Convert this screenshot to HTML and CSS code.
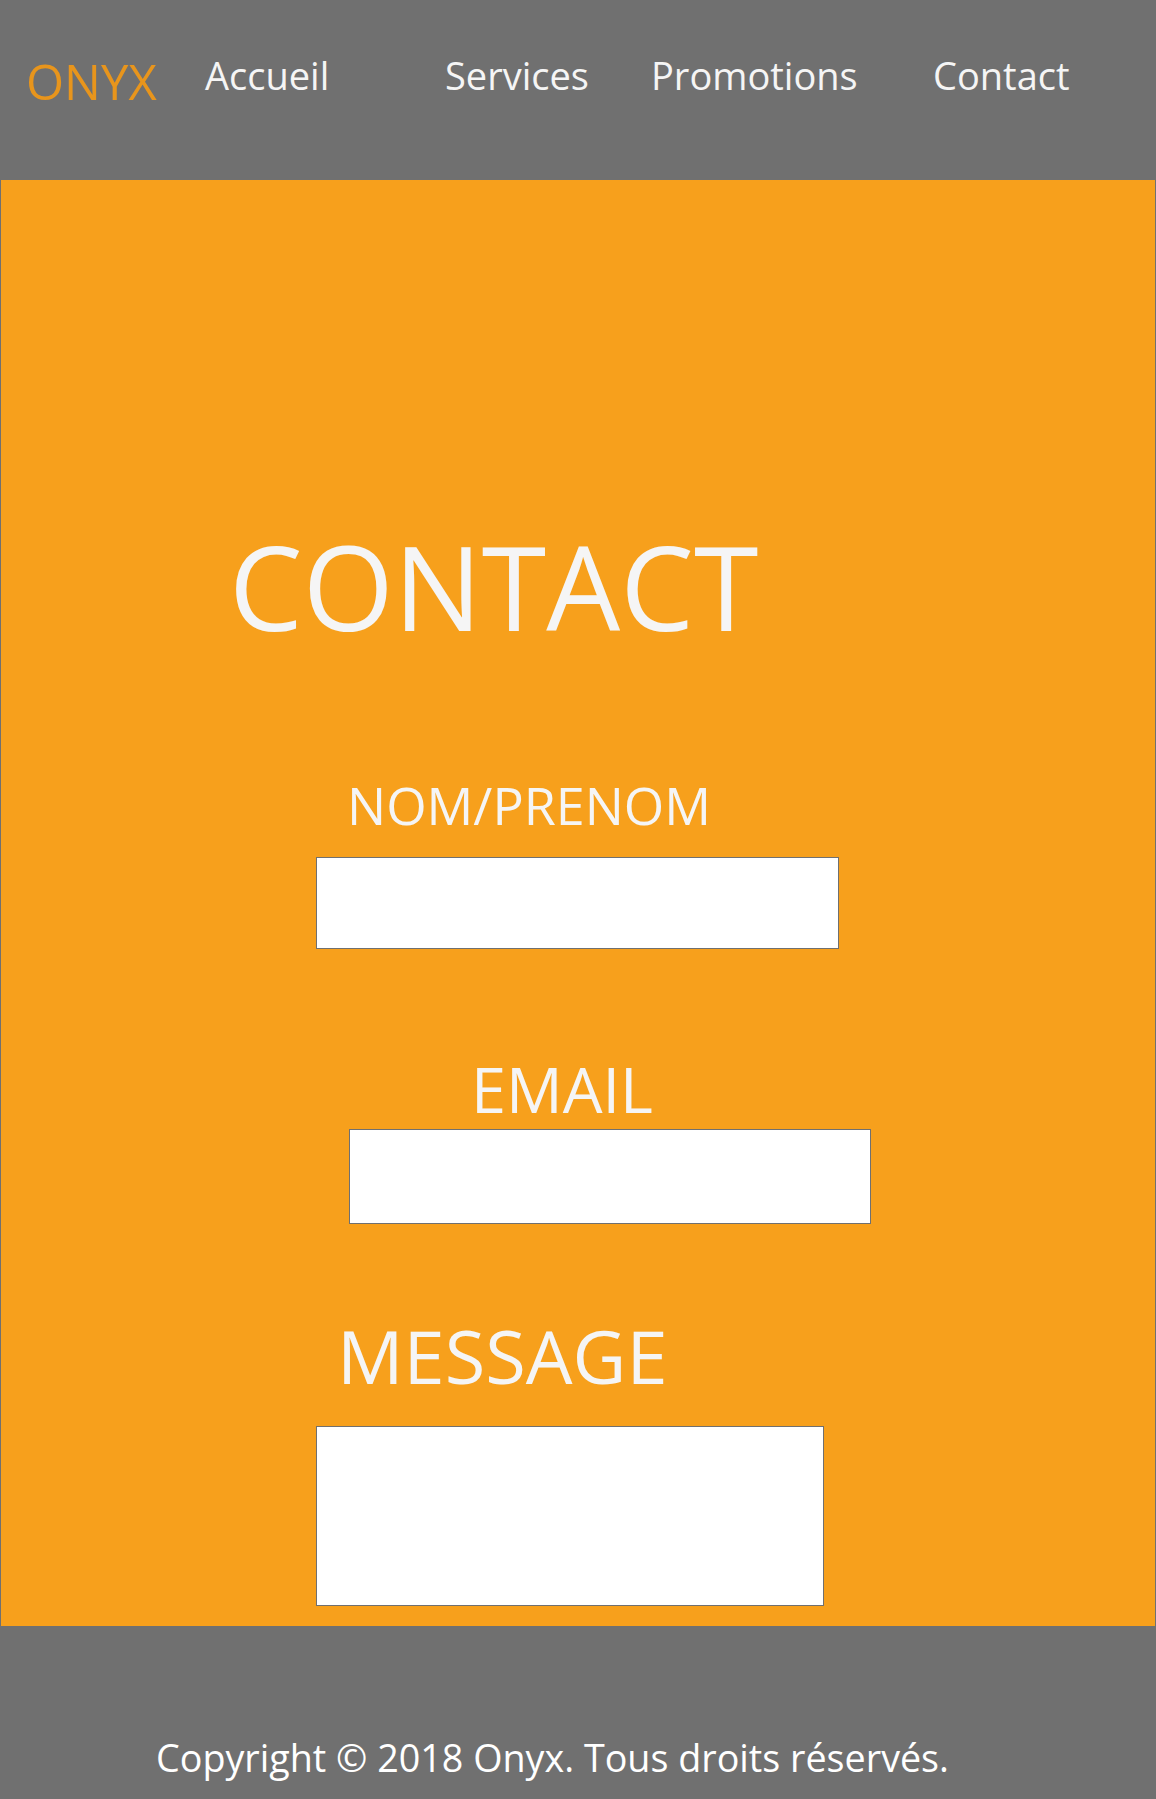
FILE: index.html
```html
<!DOCTYPE html>
<html lang="fr">
<head>
<meta charset="utf-8">
<title>Onyx - Contact</title>
<link rel="stylesheet" href="styles.css">
</head>
<body>
<header class="site-header">
  <div class="logo">ONYX</div>
  <a class="nav-link" href="#">Accueil</a>
  <a class="nav-link" href="#">Services</a>
  <a class="nav-link" href="#">Promotions</a>
  <a class="nav-link" href="#">Contact</a>
</header>
<main class="contact">
  <h1 class="contact-title">CONTACT</h1>
  <form class="contact-form">
    <label class="field-label label-name" for="nom">NOM/PRENOM</label>
    <input class="field input-name" id="nom" type="text">
    <label class="field-label label-email" for="email">EMAIL</label>
    <input class="field input-email" id="email" type="email">
    <label class="field-label label-message" for="message">MESSAGE</label>
    <textarea class="field input-message" id="message"></textarea>
  </form>
</main>
<footer class="site-footer">
  <p class="copyright">Copyright © 2018 Onyx. Tous droits réservés.</p>
</footer>
</body>
</html>
```
FILE: styles.css
```css
html, body {
  margin: 0;
  padding: 0;
}

body {
  background: #707070;
  font-family: "Open Sans", "Noto Sans", sans-serif;
  color: #f5f5f5;
  width: 1156px;
}

.site-header {
  height: 180px;
  box-sizing: border-box;
  padding: 48px 0 0 26px;
  display: grid;
  grid-template-columns: 179px 240px 206px 282px auto;
  align-items: start;
}

.logo {
  font-size: 49px;
  line-height: normal;
  color: #e8951c;
}

.nav-link {
  font-size: 38px;
  line-height: normal;
  color: #f5f5f5;
  text-decoration: none;
  margin-top: 1px;
}

.contact {
  background: #f7a01c;
  margin: 0 1px;
  padding: 0 0 20px 0;
  overflow: hidden;
}

.contact-title {
  margin: 347px 0 0 228px;
  font-size: 117px;
  font-weight: 400;
  line-height: 1;
  color: #f5f5f5;
}

.contact-form {
  display: flex;
  flex-direction: column;
  align-items: flex-start;
}

.field-label {
  display: block;
  line-height: 1;
  color: #f5f5f5;
}

.label-name {
  font-size: 52px;
  margin: 135px 0 0 346px;
}

.label-email {
  font-size: 63px;
  margin: 108px 0 0 470px;
}

.label-message {
  font-size: 74px;
  margin: 95px 0 0 336px;
}

.field {
  display: block;
  box-sizing: border-box;
  background: #ffffff;
  border: 1px solid #707070;
  border-radius: 0;
  padding: 0;
  font: inherit;
  resize: none;
  outline: none;
}

.input-name {
  width: 523px;
  height: 92px;
  margin: 26px 0 0 315px;
}

.input-email {
  width: 522px;
  height: 95px;
  margin: 9px 0 0 348px;
}

.input-message {
  width: 508px;
  height: 180px;
  margin: 33px 0 0 315px;
}

.site-footer {
  height: 173px;
  box-sizing: border-box;
  padding: 113px 0 0 156px;
}

.copyright {
  margin: 0;
  font-size: 37.7px;
  line-height: 1;
  color: #ffffff;
}
```
